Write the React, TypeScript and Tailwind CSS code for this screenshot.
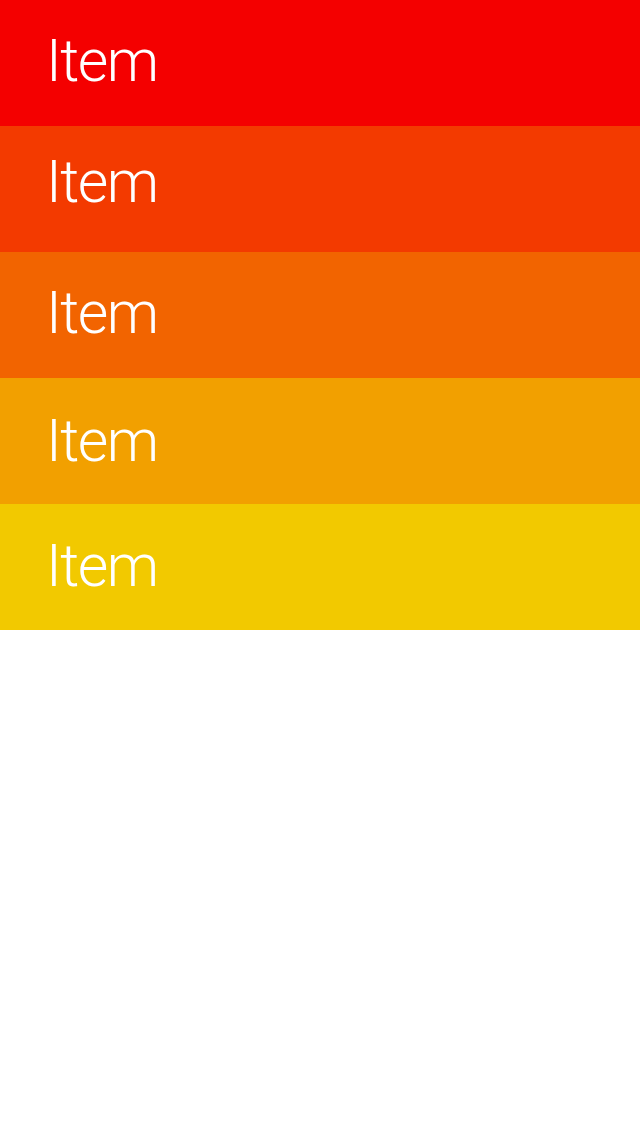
const items = [
  { label: "Item", color: "bg-[#f40000]", pad: "pb-[6px]" },
  { label: "Item", color: "bg-[#f33a00]", pad: "pb-[16px]" },
  { label: "Item", color: "bg-[#f26400]", pad: "pb-[6px]" },
  { label: "Item", color: "bg-[#f2a000]", pad: "pb-[2px]" },
  { label: "Item", color: "bg-[#f2c900]", pad: "pb-[4px]" },
];

export default function App() {
  return (
    <div className="min-h-screen w-full bg-white font-['Roboto',sans-serif]">
      <ul className="flex flex-col">
        {items.map((item, i) => (
          <li key={i} className={`flex h-[126px] items-center pl-[46px] ${item.pad} ${item.color}`}>
            <span className="text-[59px] font-light leading-none tracking-[-1.5px] text-white">{item.label}</span>
          </li>
        ))}
      </ul>
    </div>
  );
}
